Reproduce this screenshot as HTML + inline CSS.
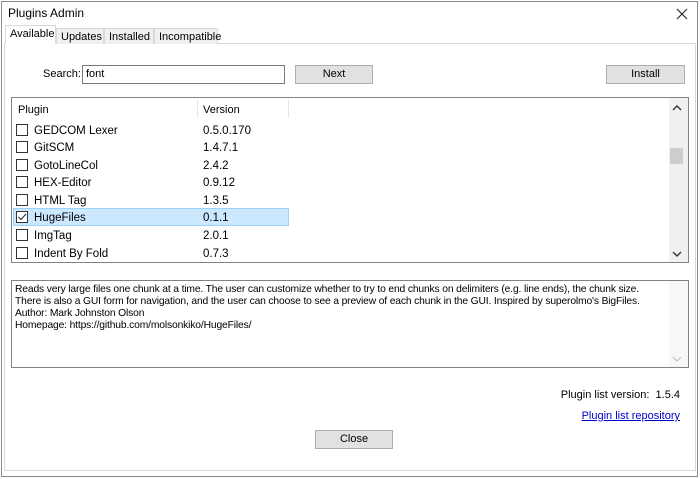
<!DOCTYPE html>
<html><head><style>
*{box-sizing:border-box;margin:0;padding:0}
body{width:700px;height:479px;background:#fff;font-family:"Liberation Sans",sans-serif;font-size:11px;color:#000;position:relative;overflow:hidden}
.a{position:absolute}
.win{left:1px;top:1px;width:697px;height:476px;border:1px solid #8a8a8a}
.tab{top:28px;height:16px;border:1px solid #d9d9d9;border-bottom:none;background:#f0f0f0;padding:2px 0 0 4px;font-size:11px}
.btn{background:#e1e1e1;border:1px solid #adadad;text-align:center;line-height:16px;font-size:11px}
.cb{width:12px;height:12px;border:1px solid #333;background:#fff;left:16px}
.row{left:34px;font-size:11.5px}
.ver{left:203px;font-size:11.5px}
</style></head><body>
<div class="a win"></div>
<div class="a" style="left:8px;top:6px;font-size:12px">Plugins Admin</div>
<svg class="a" style="left:676px;top:8px" width="12" height="12"><path d="M1 1L11 11M11 1L1 11" stroke="#222" stroke-width="1.1"/></svg>
<div class="a" style="left:4px;top:43px;width:692px;height:428px;border:1px solid #d9d9d9"></div>
<div class="a tab" style="left:5px;top:25px;height:19px;width:51px;background:#fff;padding-top:2px">Available</div>
<div class="a tab" style="left:56px;width:48px">Updates</div>
<div class="a tab" style="left:104px;width:50px">Installed</div>
<div class="a tab" style="left:154px;width:64px">Incompatible</div>
<div class="a" style="left:43px;top:68px">Search:</div>
<div class="a" style="left:82px;top:65px;width:203px;height:19px;border:1px solid #7a7a7a;padding:2px 3px">font</div>
<div class="a btn" style="left:295px;top:65px;width:78px;height:19px">Next</div>
<div class="a btn" style="left:606px;top:65px;width:79px;height:19px">Install</div>
<div class="a" style="left:11px;top:97px;width:678px;height:166px;border:1px solid #828282"></div>
<div class="a" style="left:18px;top:104px">Plugin</div>
<div class="a" style="left:197px;top:100px;width:1px;height:18px;background:#e5e5e5"></div>
<div class="a" style="left:288px;top:100px;width:1px;height:18px;background:#e5e5e5"></div>
<div class="a" style="left:203px;top:104px">Version</div>
<div class="a" style="left:13px;top:208px;width:276px;height:18px;background:#cce8ff;border:1px solid #99d1ff"></div>
<div class="a cb" style="top:124px"></div><div class="a row" style="top:125px">GEDCOM Lexer</div><div class="a ver" style="top:125px">0.5.0.170</div>
<div class="a cb" style="top:141px"></div><div class="a row" style="top:142px">GitSCM</div><div class="a ver" style="top:142px">1.4.7.1</div>
<div class="a cb" style="top:159px"></div><div class="a row" style="top:160px">GotoLineCol</div><div class="a ver" style="top:160px">2.4.2</div>
<div class="a cb" style="top:176px"></div><div class="a row" style="top:177px">HEX-Editor</div><div class="a ver" style="top:177px">0.9.12</div>
<div class="a cb" style="top:194px"></div><div class="a row" style="top:195px">HTML Tag</div><div class="a ver" style="top:195px">1.3.5</div>
<div class="a cb" style="top:211px"></div><svg class="a" style="left:16px;top:211px" width="12" height="12"><path d="M2.5 6L5 8.5L10 3" stroke="#222" fill="none"/></svg><div class="a row" style="top:212px">HugeFiles</div><div class="a ver" style="top:212px">0.1.1</div>
<div class="a cb" style="top:229px"></div><div class="a row" style="top:230px">ImgTag</div><div class="a ver" style="top:230px">2.0.1</div>
<div class="a cb" style="top:247px"></div><div class="a row" style="top:248px">Indent By Fold</div><div class="a ver" style="top:248px">0.7.3</div>
<div class="a" style="left:669px;top:98px;width:19px;height:164px;background:#f0f0f0"></div>
<div class="a" style="left:670px;top:148px;width:13px;height:16px;background:#cdcdcd"></div>
<svg class="a" style="left:672px;top:104px" width="10" height="8"><path d="M1 6L5 2L9 6" stroke="#333" fill="none" stroke-width="1.4"/></svg>
<svg class="a" style="left:672px;top:250px" width="10" height="8"><path d="M1 2L5 6L9 2" stroke="#333" fill="none" stroke-width="1.4"/></svg>
<div class="a" style="left:11px;top:280px;width:678px;height:88px;border:1px solid #828282"></div>
<div class="a" style="left:669px;top:281px;width:19px;height:86px;background:#f7f7f7"></div>
<svg class="a" style="left:672px;top:355px" width="10" height="8"><path d="M1 2L5 6L9 2" stroke="#bbb" fill="none"/></svg>
<div class="a" style="left:15px;top:284px;line-height:12px;font-size:10.3px;letter-spacing:-0.15px;white-space:nowrap">Reads very large files one chunk at a time. The user can customize whether to try to end chunks on delimiters (e.g. line ends), the chunk size.<br>There is also a GUI form for navigation, and the user can choose to see a preview of each chunk in the GUI. Inspired by superolmo's BigFiles.<br>Author: Mark Johnston Olson<br>Homepage: https://github.com/molsonkiko/HugeFiles/</div>
<div class="a" style="right:20px;top:389px">Plugin list version:&nbsp; 1.5.4</div>
<div class="a" style="right:20px;top:410px;color:#0000cc;text-decoration:underline">Plugin list repository</div>
<div class="a btn" style="left:315px;top:430px;width:78px;height:19px">Close</div>
</body></html>
